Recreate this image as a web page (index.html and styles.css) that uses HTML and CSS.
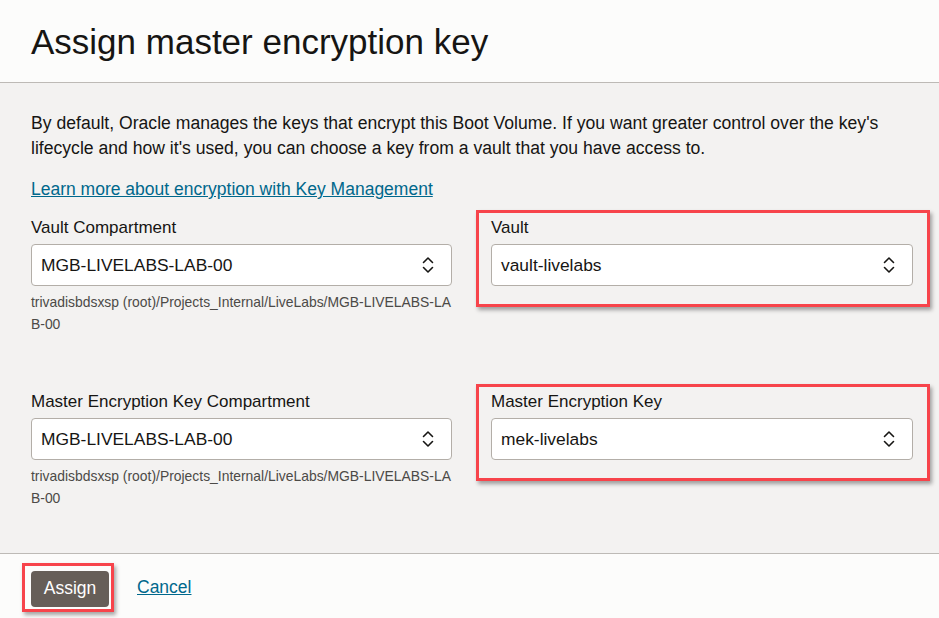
FILE: index.html
```html
<!DOCTYPE html>
<html lang="en">
<head>
<meta charset="utf-8">
<title>Assign master encryption key</title>
<link rel="stylesheet" href="styles.css">
</head>
<body>
<div class="dialog">
  <header class="header">
    <h1 class="title">Assign master encryption key</h1>
  </header>
  <main class="body">
    <p class="intro">By default, Oracle manages the keys that encrypt this Boot Volume. If you want greater control over the key's lifecycle and how it's used, you can choose a key from a vault that you have access to.</p>
    <a class="link" href="#">Learn more about encryption with Key Management</a>
    <div class="grid">
      <div class="field">
        <div class="label">Vault Compartment</div>
        <div class="select"><span>MGB-LIVELABS-LAB-00</span><svg class="chev" viewBox="0 0 12 20" width="12" height="20"><path d="M1.5 7.5 L6 3 L10.5 7.5 M1.5 12.5 L6 17 L10.5 12.5" fill="none" stroke="#161513" stroke-width="1.6" stroke-linecap="round" stroke-linejoin="round"/></svg></div>
        <div class="help">trivadisbdsxsp (root)/Projects_Internal/LiveLabs/MGB-LIVELABS-LAB-00</div>
      </div>
      <div class="field marked">
        <div class="label">Vault</div>
        <div class="select"><span>vault-livelabs</span><svg class="chev" viewBox="0 0 12 20" width="12" height="20"><path d="M1.5 7.5 L6 3 L10.5 7.5 M1.5 12.5 L6 17 L10.5 12.5" fill="none" stroke="#161513" stroke-width="1.6" stroke-linecap="round" stroke-linejoin="round"/></svg></div>
      </div>
      <div class="field">
        <div class="label">Master Encryption Key Compartment</div>
        <div class="select"><span>MGB-LIVELABS-LAB-00</span><svg class="chev" viewBox="0 0 12 20" width="12" height="20"><path d="M1.5 7.5 L6 3 L10.5 7.5 M1.5 12.5 L6 17 L10.5 12.5" fill="none" stroke="#161513" stroke-width="1.6" stroke-linecap="round" stroke-linejoin="round"/></svg></div>
        <div class="help">trivadisbdsxsp (root)/Projects_Internal/LiveLabs/MGB-LIVELABS-LAB-00</div>
      </div>
      <div class="field marked">
        <div class="label">Master Encryption Key</div>
        <div class="select"><span>mek-livelabs</span><svg class="chev" viewBox="0 0 12 20" width="12" height="20"><path d="M1.5 7.5 L6 3 L10.5 7.5 M1.5 12.5 L6 17 L10.5 12.5" fill="none" stroke="#161513" stroke-width="1.6" stroke-linecap="round" stroke-linejoin="round"/></svg></div>
      </div>
    </div>
  </main>
  <footer class="footer">
    <button class="btn marked-btn" type="button">Assign</button>
    <a class="cancel" href="#">Cancel</a>
  </footer>
</div>
</body>
</html>
```
FILE: styles.css
```css
* { box-sizing: border-box; }
html, body { margin: 0; padding: 0; }
body {
  font-family: "Liberation Sans", Arial, sans-serif;
  color: #161513;
  background: #f3f2f1;
  width: 939px;
  height: 618px;
  overflow: hidden;
}
.dialog { display: flex; flex-direction: column; height: 618px; }
.header {
  height: 83px;
  flex: none;
  background: #fcfcfb;
  border-bottom: 1px solid #bdbab6;
  display: flex;
  align-items: center;
  padding-left: 31px;
}
.title {
  margin: 0;
  font-weight: normal;
  font-size: 35px;
  line-height: 40px;
  padding-top: 2px;
}
.body {
  height: 470px;
  flex: none;
  background: #f3f2f1;
  padding: 28px 26px 0 31px;
}
.intro {
  margin: 0;
  font-size: 17.6px;
  line-height: 25px;
}
.link {
  display: block;
  margin-top: 16px;
  font-size: 17.5px;
  line-height: 25px;
  color: #00688c;
  text-decoration: underline;
  width: max-content;
}
.grid {
  margin-top: 16px;
  display: grid;
  grid-template-columns: 421px 422px;
  column-gap: 39px;
  row-gap: 57px;
  align-items: start;
}
.field { position: relative; }
.label {
  font-size: 17px;
  line-height: 20px;
  margin-bottom: 6px;
}
.select {
  height: 42px;
  background: #fff;
  border: 1px solid #b3aea8;
  border-radius: 4px;
  display: flex;
  align-items: center;
  justify-content: space-between;
  padding: 0 17px 0 9px;
  font-size: 17.4px;
}
.chev { display: block; }
.help {
  margin-top: 5px;
  font-size: 13.9px;
  line-height: 22px;
  color: #4c4a47;
  word-break: break-all;
}
.marked::after {
  content: "";
  position: absolute;
  left: -15px;
  top: -8px;
  right: -17px;
  bottom: -21px;
  border: 3px solid #f7444b;
  box-shadow: 2px 3px 4px rgba(0,0,0,0.35);
  pointer-events: none;
}
.footer {
  flex: 1;
  background: #fcfcfb;
  border-top: 1px solid #bdbab6;
  display: flex;
  align-items: center;
  padding-left: 31px;
  gap: 28px;
}
.btn {
  position: relative;
  height: 36px;
  width: 78px;
  border: none;
  border-radius: 4px;
  background: #665e58;
  color: #fff;
  font-family: "Liberation Sans", Arial, sans-serif;
  font-size: 17.5px;
  padding: 0;
  margin-top: 5px;
}
.marked-btn::after {
  content: "";
  position: absolute;
  left: -9px;
  top: -8px;
  right: -5px;
  bottom: -5px;
  border: 3px solid #f7444b;
  box-shadow: 2px 3px 4px rgba(0,0,0,0.35);
}
.cancel {
  font-size: 17.5px;
  color: #00688c;
  text-decoration: underline;
  margin-top: 3px;
}
```
